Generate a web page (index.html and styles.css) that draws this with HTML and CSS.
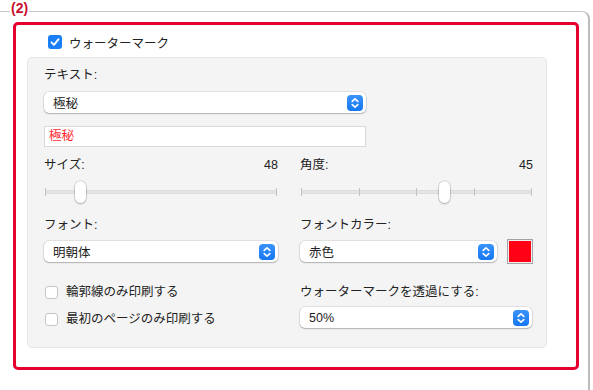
FILE: index.html
```
<!DOCTYPE html>
<html lang="ja">
<head>
<meta charset="UTF-8">
<meta name="viewport" content="width=device-width, initial-scale=1.0">
<title>watermark settings</title>
<link rel="stylesheet" href="styles.css">
</head>
<body>
    <div class="page">
        <span class="step">(2)</span>
        <div class="window">
            <div class="frame">
                <div class="check-row main-check">
                    <span class="checkbox checked">
                        <svg width="14" height="14" viewBox="0 0 14 14"><path d="M3.5 7.3 L6 9.8 L10.6 4.2" fill="none" stroke="#fff" stroke-width="1.9" stroke-linecap="round" stroke-linejoin="round"/></svg>
                    </span>
                    <span>ウォーターマーク</span>
                </div>
                <div class="panel">
                    <div class="field-label">テキスト:</div>
                    <div class="select wide">
                        <span>極秘</span>
                        <span class="stepper"><svg width="16" height="16" viewBox="0 0 16 16"><path d="M5.2 6.4 L8 3.8 L10.8 6.4 M5.2 9.6 L8 12.2 L10.8 9.6" fill="none" stroke="#fff" stroke-width="1.6" stroke-linecap="round" stroke-linejoin="round"/></svg></span>
                    </div>
                    <div class="text-input">極秘</div>

                    <div class="columns">
                        <!-- size / angle -->
                        <div class="col">
                            <div class="value-row"><span>サイズ:</span><span>48</span></div>
                            <div class="slider">
                                <span class="tick"></span>
                                <span class="tick"></span>
                                <span class="thumb" style="left: 15.4%"></span>
                            </div>
                        </div>
                        <div class="col">
                            <div class="value-row"><span>角度:</span><span>45</span></div>
                            <div class="slider">
                                <span class="tick"></span>
                                <span class="tick"></span>
                                <span class="tick"></span>
                                <span class="tick"></span>
                                <span class="tick"></span>
                                <span class="thumb" style="left: 61.8%"></span>
                            </div>
                        </div>

                        <!-- font / colour -->
                        <div class="col">
                            <div class="field-label spaced">フォント:</div>
                            <div class="select row-select">
                                <span>明朝体</span>
                                <span class="stepper"><svg width="16" height="16" viewBox="0 0 16 16"><path d="M5.2 6.4 L8 3.8 L10.8 6.4 M5.2 9.6 L8 12.2 L10.8 9.6" fill="none" stroke="#fff" stroke-width="1.6" stroke-linecap="round" stroke-linejoin="round"/></svg></span>
                            </div>
                        </div>
                        <div class="col">
                            <div class="field-label spaced">フォントカラー:</div>
                            <div class="color-row">
                                <div class="select">
                                    <span>赤色</span>
                                    <span class="stepper"><svg width="16" height="16" viewBox="0 0 16 16"><path d="M5.2 6.4 L8 3.8 L10.8 6.4 M5.2 9.6 L8 12.2 L10.8 9.6" fill="none" stroke="#fff" stroke-width="1.6" stroke-linecap="round" stroke-linejoin="round"/></svg></span>
                                </div>
                                <span class="swatch"><span class="swatch-fill"></span></span>
                            </div>
                        </div>

                        <!-- options / opacity -->
                        <div class="col">
                            <div class="check-row option first">
                                <span class="checkbox"></span>
                                <span>輪郭線のみ印刷する</span>
                            </div>
                            <div class="check-row option">
                                <span class="checkbox"></span>
                                <span>最初のページのみ印刷する</span>
                            </div>
                        </div>
                        <div class="col">
                            <div class="field-label lower">ウォーターマークを透過にする:</div>
                            <div class="select row-select opacity">
                                <span>50%</span>
                                <span class="stepper"><svg width="16" height="16" viewBox="0 0 16 16"><path d="M5.2 6.4 L8 3.8 L10.8 6.4 M5.2 9.6 L8 12.2 L10.8 9.6" fill="none" stroke="#fff" stroke-width="1.6" stroke-linecap="round" stroke-linejoin="round"/></svg></span>
                            </div>
                        </div>
                    </div>
                </div>
            </div>
        </div>
    </div>
</body>
</html>
```

FILE: styles.css
```
body {
    margin: 0;
    background-color: #ffffff;
    font-family: "Liberation Sans", "Noto Sans CJK JP", sans-serif;
    font-size: 12px;
    color: #222;
}
.page {
    position: relative;
    height: 390px;
    overflow: hidden;
}
.step {
    position: absolute;
    left: 10px;
    top: 1px;
    padding: 0 1px;
    background-color: #ffffff;
    font-weight: bold;
    font-size: 14px;
    line-height: 15px;
    color: #c8102e;
}
.window {
    margin-top: 11px;
    width: 590px;
    height: 379px;
    box-sizing: border-box;
    border-top: 1px solid #c8c8c8;
    border-right: 2px solid #bbbbbb;
    border-top-right-radius: 8px;
}
.frame {
    margin: 10px 0 0 13px;
    width: 566px;
    height: 348px;
    box-sizing: border-box;
    border: 3px solid #e5002d;
    border-radius: 5px;
}
.check-row {
    display: flex;
    align-items: center;
}
.main-check {
    margin: 10px 0 0 32px;
    height: 14px;
    gap: 7px;
    font-size: 12.5px;
}
.checkbox {
    width: 13px;
    height: 13px;
    box-sizing: border-box;
    border: 1px solid #c6c6c6;
    border-radius: 3px;
    background-color: #ffffff;
    flex-shrink: 0;
}
.checkbox.checked {
    width: 14px;
    height: 14px;
    border: none;
    background-color: #1a7ef5;
    display: flex;
}
.panel {
    margin: 8px 0 0 11px;
    width: 520px;
    height: 291px;
    box-sizing: border-box;
    background-color: #f4f4f4;
    border: 1px solid #e6e6e6;
    border-radius: 5px;
    padding: 9px 13px 0 16px;
}
.field-label {
    height: 16px;
    line-height: 16px;
    font-size: 12.5px;
}
.select {
    display: flex;
    align-items: center;
    justify-content: space-between;
    height: 21px;
    box-sizing: border-box;
    background-color: #ffffff;
    border-radius: 5px;
    box-shadow: 0 0 0 0.5px rgba(0, 0, 0, 0.16), 0 1px 1.5px rgba(0, 0, 0, 0.22);
    padding: 0 3px 0 9px;
    font-size: 12.5px;
}
.select.wide {
    width: 322px;
    margin-top: 9px;
}
.stepper {
    width: 16px;
    height: 16px;
    border-radius: 4px;
    background: linear-gradient(#3b93fb, #1577f1);
    display: flex;
}
.text-input {
    width: 322px;
    height: 21px;
    margin-top: 13px;
    box-sizing: border-box;
    background-color: #ffffff;
    border: 1px solid #d9d9d9;
    color: #ff1f2f;
    padding-left: 4px;
    line-height: 19px;
    font-size: 12.5px;
}
.columns {
    display: grid;
    grid-template-columns: 234px 233px;
    column-gap: 22px;
}
.value-row {
    display: flex;
    justify-content: space-between;
    height: 16px;
    line-height: 16px;
    margin-top: 10px;
    font-size: 12.5px;
}
.slider {
    position: relative;
    height: 24px;
    margin-top: 7px;
    padding: 0 1px;
    display: flex;
    justify-content: space-between;
    align-items: center;
}
.slider::before {
    content: "";
    position: absolute;
    left: 1px;
    right: 1px;
    top: 10px;
    height: 4px;
    border-radius: 2px;
    background-color: #e4e4e4;
    box-shadow: inset 0 0 0 0.5px #d6d6d6;
}
.tick {
    position: relative;
    width: 1px;
    height: 8px;
    background-color: #c2c2c2;
}
.thumb {
    position: absolute;
    top: 1px;
    width: 11px;
    height: 22px;
    margin-left: -5px;
    background-color: #ffffff;
    border-radius: 6px;
    box-shadow: 0 0 0 0.5px rgba(0, 0, 0, 0.2), 0 1px 2px rgba(0, 0, 0, 0.25);
}
.field-label.spaced {
    margin-top: 13px;
}
.row-select {
    margin-top: 8px;
}
.color-row {
    display: flex;
    align-items: center;
    gap: 10px;
    margin-top: 8px;
    height: 21px;
}
.color-row .select {
    flex: 1;
}
.swatch {
    width: 26px;
    height: 25px;
    margin: -2px 0;
    box-sizing: border-box;
    border: 1px solid #a3a3a3;
    padding: 1px;
    background-color: #f0f0f0;
    display: flex;
}
.swatch-fill {
    flex: 1;
    background-color: #ff0014;
}
.option {
    gap: 8px;
    height: 16px;
    line-height: 16px;
    margin-top: 11px;
    padding-left: 1px;
    font-size: 12.5px;
}
.option.first {
    margin-top: 22px;
}
.field-label.lower {
    margin-top: 22px;
}
.opacity {
    margin-top: 7px;
    width: 232px;
}
```
